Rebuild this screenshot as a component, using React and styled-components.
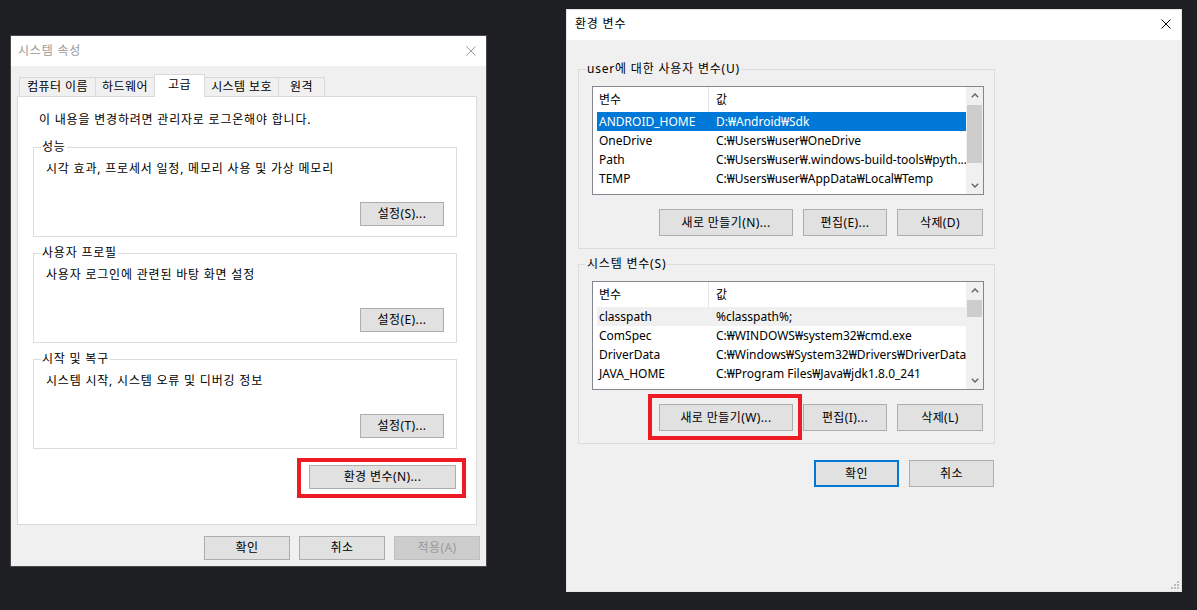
import React from 'react';
import styled, { createGlobalStyle } from 'styled-components';

const GlobalStyle = createGlobalStyle`
  * { box-sizing: border-box; }
  html, body {
    margin: 0;
    padding: 0;
    background: #1d1f22;
  }
  body {
    font-family: "Noto Sans", "Noto Sans CJK KR", sans-serif;
    font-size: 12px;
    line-height: 16px;
    letter-spacing: 0.8px;
    color: #000;
  }
`;

const Desktop = styled.div`
  width: 1197px;
  height: 610px;
  overflow: hidden;
  display: flex;
  align-items: flex-start;
  gap: 79px;
  padding-left: 10px;
`;

const Window = styled.section`
  position: relative;
  flex-shrink: 0;
  display: flex;
  flex-direction: column;
  width: ${p => p.$w}px;
  height: ${p => p.$h}px;
  margin-top: ${p => p.$top}px;
  background: #f0f0f0;
  border: 1px solid ${p => p.$edge};
`;

const TitleBar = styled.header`
  flex-shrink: 0;
  height: 30px;
  display: flex;
  align-items: center;
  justify-content: space-between;
  padding: 0 10px ${p => (p.$active ? 2 : 0)}px ${p => p.$pad}px;
  background: #fff;
  color: ${p => (p.$active ? '#000' : '#999')};
`;

const Close = ({ color }) => (
  <svg width="10" height="10" viewBox="0 0 10 10">
    <path d="M0.5 0.5 L9.5 9.5 M9.5 0.5 L0.5 9.5" stroke={color} strokeWidth="1" fill="none" />
  </svg>
);

/* ---------- left sheet ---------- */

const SheetBody = styled.div`
  flex: 1;
  display: flex;
  flex-direction: column;
  padding: 8px 9px 0 6px;
`;

const TabStrip = styled.div`
  position: relative;
  z-index: 1;
  display: flex;
  align-items: flex-end;
  height: 23px;
  margin: 0 0 -1px 2px;
`;

const Tab = styled.div`
  width: ${p => p.$w}px;
  height: ${p => (p.$active ? 23 : 20)}px;
  margin-left: -1px;
  display: flex;
  align-items: center;
  justify-content: center;
  padding-bottom: ${p => (p.$active ? 3 : 1)}px;
  white-space: nowrap;
  letter-spacing: 0.4px;
  background: ${p => (p.$active ? '#fff' : '#f0f0f0')};
  border: 1px solid #d9d9d9;
  border-bottom: ${p => (p.$active ? 'none' : '1px solid #d9d9d9')};

  &:first-child { margin-left: 0; }
`;

const Panel = styled.div`
  height: 429px;
  display: flex;
  flex-direction: column;
  padding: 15px 19px 0 15px;
  background: #fff;
  border: 1px solid #d9d9d9;
`;

const Note = styled.p`
  margin: 0 0 0 6px;
  white-space: nowrap;
`;

const Group = styled.div`
  position: relative;
  display: flex;
  flex-direction: column;
  height: ${p => p.$h}px;
  margin-top: ${p => p.$gap}px;
  padding: ${p => p.$pad};
  border: 1px solid #dcdcdc;
`;

const Caption = styled.span`
  position: absolute;
  top: -9px;
  left: 7px;
  padding: 0 1px;
  background: ${p => p.$bg};
  white-space: nowrap;
`;

const GroupText = styled.div`
  white-space: nowrap;
`;

const Button = styled.button`
  width: ${p => p.$w}px;
  height: ${p => p.$h}px;
  padding: 0;
  font: inherit;
  letter-spacing: 0.4px;
  color: #000;
  background: #e1e1e1;
  border: ${p => (p.$default ? '2px solid #0078d7' : '1px solid #adadad')};
  white-space: nowrap;

  &:disabled {
    color: #9a9a9a;
    background: #cccccc;
    border-color: #bfbfbf;
  }
`;

const GroupButton = styled(Button)`
  align-self: flex-end;
  margin-top: auto;
`;

const Marked = styled.span`
  position: relative;
  display: inline-flex;

  &::after {
    content: '';
    position: absolute;
    top: ${p => p.$t}px;
    left: ${p => p.$l}px;
    right: ${p => p.$r}px;
    bottom: ${p => p.$b}px;
    border: 4px solid #ed1c24;
    pointer-events: none;
  }
`;

const ActionRow = styled.div`
  display: flex;
  justify-content: flex-end;
  margin-top: ${p => p.$gap}px;
  padding-right: 1px;
`;

const Footer = styled.div`
  display: flex;
  justify-content: flex-end;
  gap: ${p => p.$gap}px;
  margin: ${p => p.$top}px ${p => p.$right}px 0 0;
`;

/* ---------- right dialog ---------- */

const EnvBody = styled.div`
  flex: 1;
  width: 428px;
  display: flex;
  flex-direction: column;
  padding: 29px 0 0 11px;
`;

const ListView = styled.div`
  flex-shrink: 0;
  display: flex;
  height: 109px;
  letter-spacing: 0;
  background: #fff;
  border: 1px solid #828790;
`;

const Grid = styled.div`
  flex: 1;
  overflow: hidden;
`;

const HeaderRow = styled.div`
  display: flex;
  height: 25px;
`;

const HeaderCell = styled.div`
  display: flex;
  align-items: center;
  width: ${p => (p.$w ? `${p.$w}px` : 'auto')};
  flex: ${p => (p.$w ? 'none' : 1)};
  padding-left: ${p => p.$pad}px;
  border-right: ${p => (p.$w ? '1px solid #e5e5e5' : 'none')};
`;

const Row = styled.div`
  display: flex;
  align-items: center;
  height: 19px;
  margin-left: 4px;
  white-space: nowrap;
  color: ${p => (p.$state === 'selected' ? '#fff' : '#000')};
  background: ${p =>
    p.$state === 'selected' ? '#0078d7' : p.$state === 'inactive' ? '#f0f0f0' : 'transparent'};
`;

const NameCell = styled.span`
  flex: none;
  width: 119px;
  padding-left: 2px;
  overflow: hidden;
`;

const ValueCell = styled.span`
  flex: 1;
  overflow: hidden;
`;

const ScrollBar = styled.div`
  flex: none;
  width: 17px;
  display: flex;
  flex-direction: column;
  background: #f0f0f0;
`;

const ArrowButton = styled.div`
  flex: none;
  height: 17px;
  display: flex;
  align-items: center;
  justify-content: center;
`;

const Thumb = styled.div`
  flex: none;
  height: ${p => p.$h}px;
  margin: 1px 1px 0;
  background: #cdcdcd;
`;

const Track = styled.div`
  flex: 1;
`;

const Chevron = ({ down }) => (
  <svg width="8" height="5" viewBox="0 0 8 5">
    <polyline
      points={down ? '0.8,0.8 4,4 7.2,0.8' : '0.8,4.2 4,1 7.2,4.2'}
      fill="none"
      stroke="#606060"
      strokeWidth="1.3"
    />
  </svg>
);

const Grip = styled.svg`
  position: absolute;
  right: 2px;
  bottom: 2px;
`;

const VarList = ({ rows, thumb }) => (
  <ListView>
    <Grid>
      <HeaderRow>
        <HeaderCell $w={116} $pad={6}>변수</HeaderCell>
        <HeaderCell $pad={7}>값</HeaderCell>
      </HeaderRow>
      {rows.map(r => (
        <Row key={r.name} $state={r.state}>
          <NameCell>{r.name}</NameCell>
          <ValueCell>{r.value}</ValueCell>
        </Row>
      ))}
    </Grid>
    <ScrollBar>
      <ArrowButton><Chevron /></ArrowButton>
      <Thumb $h={thumb} />
      <Track />
      <ArrowButton><Chevron down /></ArrowButton>
    </ScrollBar>
  </ListView>
);

const userVars = [
  { name: 'ANDROID_HOME', value: 'D:₩Android₩Sdk', state: 'selected' },
  { name: 'OneDrive', value: 'C:₩Users₩user₩OneDrive' },
  { name: 'Path', value: 'C:₩Users₩user₩.windows-build-tools₩pyth...' },
  { name: 'TEMP', value: 'C:₩Users₩user₩AppData₩Local₩Temp' },
];

const systemVars = [
  { name: 'classpath', value: '%classpath%;', state: 'inactive' },
  { name: 'ComSpec', value: 'C:₩WINDOWS₩system32₩cmd.exe' },
  { name: 'DriverData', value: 'C:₩Windows₩System32₩Drivers₩DriverData' },
  { name: 'JAVA_HOME', value: 'C:₩Program Files₩Java₩jdk1.8.0_241' },
];

const perfGroups = [
  { title: '성능', text: '시각 효과, 프로세서 일정, 메모리 사용 및 가상 메모리', button: '설정(S)...', gap: 19 },
  { title: '사용자 프로필', text: '사용자 로그인에 관련된 바탕 화면 설정', button: '설정(E)...', gap: 16 },
  { title: '시작 및 복구', text: '시스템 시작, 시스템 오류 및 디버깅 정보', button: '설정(T)...', gap: 16 },
];

const tabs = [
  { label: '컴퓨터 이름', w: 77 },
  { label: '하드웨어', w: 60 },
  { label: '고급', w: 51, active: true },
  { label: '시스템 보호', w: 75 },
  { label: '원격', w: 47 },
];

export default function App() {
  return (
    <>
      <GlobalStyle />
      <Desktop>
        <Window $w={477} $h={532} $top={35} $edge="#474747">
          <TitleBar $pad={7}>
            <span>시스템 속성</span>
            <Close color="#999" />
          </TitleBar>
          <SheetBody>
            <TabStrip>
              {tabs.map(t => (
                <Tab key={t.label} $w={t.w} $active={t.active}>{t.label}</Tab>
              ))}
            </TabStrip>
            <Panel>
              <Note>이 내용을 변경하려면 관리자로 로그온해야 합니다.</Note>
              {perfGroups.map(g => (
                <Group key={g.title} $h={90} $gap={g.gap} $pad="13px 12px 10px 12px">
                  <Caption $bg="#fff">{g.title}</Caption>
                  <GroupText>{g.text}</GroupText>
                  <GroupButton $w={84} $h={24}>{g.button}</GroupButton>
                </Group>
              ))}
              <ActionRow $gap={16}>
                <Marked $t={-7} $l={-12} $r={-10} $b={-9}>
                  <Button $w={147} $h={24}>환경 변수(N)...</Button>
                </Marked>
              </ActionRow>
            </Panel>
            <Footer $gap={9} $top={11} $right={-3}>
              <Button $w={86} $h={24}>확인</Button>
              <Button $w={86} $h={24}>취소</Button>
              <Button $w={86} $h={24} disabled>적용(A)</Button>
            </Footer>
          </SheetBody>
        </Window>

        <Window $w={616} $h={583} $top={9} $edge="#e6e6e6">
          <TitleBar $pad={8} $active>
            <span>환경 변수</span>
            <Close color="#000" />
          </TitleBar>
          <EnvBody>
            <Group $h={180} $gap={0} $pad="16px 10px 11px 13px">
              <Caption $bg="#f0f0f0">user에 대한 사용자 변수(U)</Caption>
              <VarList rows={userVars} thumb={58} />
              <ActionRow $gap={14}>
                <Footer $gap={10} $top={0} $right={0}>
                  <Button $w={134} $h={27}>새로 만들기(N)...</Button>
                  <Button $w={84} $h={27}>편집(E)...</Button>
                  <Button $w={86} $h={27}>삭제(D)</Button>
                </Footer>
              </ActionRow>
            </Group>
            <Group $h={180} $gap={15} $pad="16px 10px 11px 13px">
              <Caption $bg="#f0f0f0">시스템 변수(S)</Caption>
              <VarList rows={systemVars} thumb={17} />
              <ActionRow $gap={14}>
                <Footer $gap={10} $top={0} $right={0}>
                  <Marked $t={-10} $l={-11} $r={-9} $b={-9}>
                    <Button $w={134} $h={27}>새로 만들기(W)...</Button>
                  </Marked>
                  <Button $w={84} $h={27}>편집(I)...</Button>
                  <Button $w={86} $h={27}>삭제(L)</Button>
                </Footer>
              </ActionRow>
            </Group>
            <Footer $gap={10} $top={16} $right={1}>
              <Button $w={85} $h={27} $default>확인</Button>
              <Button $w={85} $h={27}>취소</Button>
            </Footer>
          </EnvBody>
          <Grip width="8" height="8" viewBox="0 0 8 8">
            <rect x="6" y="0" width="2" height="2" fill="#bdbdbd" />
            <rect x="3" y="3" width="2" height="2" fill="#bdbdbd" />
            <rect x="6" y="3" width="2" height="2" fill="#bdbdbd" />
            <rect x="0" y="6" width="2" height="2" fill="#bdbdbd" />
            <rect x="3" y="6" width="2" height="2" fill="#bdbdbd" />
            <rect x="6" y="6" width="2" height="2" fill="#bdbdbd" />
          </Grip>
        </Window>
      </Desktop>
    </>
  );
}
